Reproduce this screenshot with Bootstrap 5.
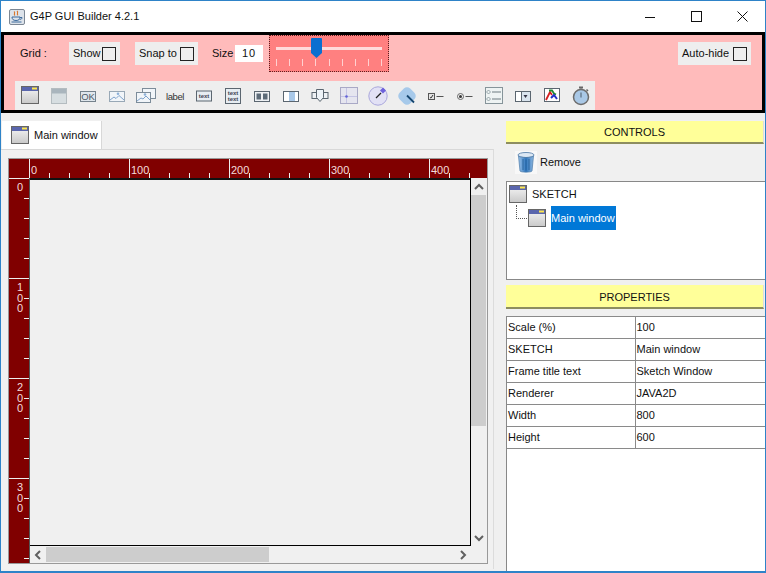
<!doctype html>
<html lang="en"><head><meta charset="utf-8"><title>G4P GUI Builder</title>
<link href="https://cdn.jsdelivr.net/npm/bootstrap@5.3.0/dist/css/bootstrap.min.css" rel="stylesheet">
<style>
html,body{margin:0;height:573px;width:766px;overflow:hidden}
body{font-family:"Liberation Sans",Arial,sans-serif;font-size:11px;line-height:1.2;color:#111;background:#eee;white-space:nowrap}
svg{display:block;flex:none}
.win{height:573px;border:1px solid #2e83c8;border-width:1px 1px 2px 1px;background:#f0f0f0}
.titlebar{height:31px;background:#fff}
.app-ico{margin-left:8px;margin-right:5px}
.title{font-size:11px}
.wbtn{width:46px;height:31px}
.tools{height:81px;border:3px solid #000;background:#ffbbbb}
.row1{height:37px}
.grid-l{width:65px;padding-left:16px}
.opt{height:23px;background:#eee;padding:0 4px}
.opt.show{width:51px;margin-right:15px}
.opt.snap{width:63px;margin-right:14px}
.opt.auto{width:73px;margin-right:11px}
.size-l{width:23px}
input.box[type=checkbox]{width:14px;height:14px;margin:0;border:1px solid #222;border-radius:0;background-color:transparent}
.size-v{width:28px;height:17px;background:#fff;margin-right:6px;letter-spacing:1px}
.slider{width:120px;height:37px;background:#ff8080;border:1px dotted #5a2020;padding:0 6px}
.track{height:3px;background:#ffdcdc;margin-top:11px}
.ticks{margin-top:9px;height:7px}
.ticks i{width:1px;background:#ffd0d0}
.thumb{left:41px;top:2px}
.toolbar{width:580px;height:29px;margin:9px 0 0 11px;background:#eee}
.cell{width:29px}
.main{height:458px}
.left{width:505px}
.tabs{height:36px;padding:8px 0 0 1px}
.tab{width:100px;height:28px;background:#fff;padding-left:9px;border-right:1px solid #d8d8d8;gap:5px}
.tab span,.t1 span,.sel{padding-top:1px}
.tabbody{border-top:1px solid #d8d8d8;border-right:1px solid #dcdcdc;padding:8px 0 0 7px;height:420px;margin-right:12px;background:#f1f1f1}
.pane{width:480px;height:406px;border:1px solid #999;background:#f0f0f0}
.rt{height:20px;background:#800000;color:#f3dcdc;overflow:hidden}
.rt-corner{width:20px;flex:none}
.rt-cell{width:100px;flex:none;border-left:1px solid #eee;padding:4px 0 0 1px;font-size:11px;line-height:14px;background:repeating-linear-gradient(90deg,transparent 0 19px,#eee 19px 20px) bottom/100% 5px no-repeat}
.rl{width:21px;flex:none;background:#800000;border-right:1px solid #555;overflow:hidden;color:#f3dcdc}
.rl-cell{height:100px;border-top:1px solid #eee;padding:2px 0 0 5px;font-size:11px;background:repeating-linear-gradient(180deg,transparent 0 19px,#eee 19px 20px) right/5px 100% no-repeat}
.rl-cell span{display:block;writing-mode:vertical-rl;text-orientation:upright;letter-spacing:-1.5px;line-height:11px;width:11px}
.canvas{background:#f0f0f0;border-top:2px solid #111;border-right:1px solid #000;border-bottom:1px solid #000}
.vbar{width:16px}
.vbar .end{height:17px}
.vbar .th{width:15px;height:231px;background:#cdcdcd}
.hbar{height:17px}
.hbar .end{width:16px}
.hbar .th{width:223px;height:15px;background:#cdcdcd}
.right{width:259px}
.ybtn{height:23px;padding:2px 0 0;background:#ffff99;border:0;border-bottom:2px solid #8d8d60;border-right:1px solid #ddd;margin-right:1px;color:#111;font-size:11px;line-height:1}
.ybtn.p2{height:24px;margin-top:5px;padding-top:3px}
.remove{height:37px;padding-left:9px;gap:3px}
.tree{height:99px;background:#fff;border:1px solid #888;border-right:0;padding-top:3px}
.t1{height:18px;padding-left:2px;gap:5px}
.t2{margin-top:3px;height:24px}
.conn{width:11px;height:14px;margin:-1px 1px 0 9px;align-self:flex-start;border-left:1px dotted #555;border-bottom:1px dotted #555}
.sel{background:#0078d7;color:#fff;width:65px;height:24px;margin-left:5px}
.props{flex:1;background:#fff;border-left:1px solid #888;margin-top:7px}
.table.pt{margin:0;width:258px;table-layout:fixed;border-collapse:collapse;font-size:11px}
.pt td{padding:0 0 0 1px;height:22px;border:1px solid #8a8a8a;border-left:0;border-right:0;vertical-align:middle;background:#fff;color:#111;line-height:1}
.pt td:first-child{width:128px;border-right:1px solid #8a8a8a}
.fg{min-height:0}
</style></head><body>
<svg width="0" height="0" class="position-absolute">
<defs><linearGradient id="g1" x1="0" y1="0" x2="0" y2="1"><stop offset="0" stop-color="#f6f6f6"/><stop offset="1" stop-color="#c9c9c9"/></linearGradient>
<linearGradient id="tc" x1="0" y1="0" x2="1" y2="0"><stop offset="0" stop-color="#9cc3ea"/><stop offset=".5" stop-color="#2f76bd"/><stop offset="1" stop-color="#8fb8e0"/></linearGradient></defs>
<symbol id="win" viewBox="0 0 18 18"><rect x=".5" y=".5" width="17" height="17" fill="url(#g1)" stroke="#666"/><rect x="1" y="1" width="16" height="4" fill="#5a66ad"/><rect x="11" y="1.5" width="5" height="2" fill="#ffe84d"/></symbol>
</svg>
<div class="win d-flex flex-column">
 <div class="titlebar d-flex align-items-center">
  <svg class="app-ico" width="16" height="16" viewBox="0 0 16 16"><rect x=".5" y=".5" width="15" height="15" rx="1.5" fill="#dde3ea" stroke="#7c8794"/><path d="M5 2.500c2 1.500-1 2.500 1 4M8 2c2 1.800-1 2.800 1 4.400" fill="none" stroke="#d9762b" stroke-width="1.100"/><path d="M3 8h8c0 2-1 3.500-4 3.500S3 10 3 8zM11 8.500h2c0 1.500-1 2-2.300 2" fill="none" stroke="#3d6a9c"/><path d="M2.500 13h10" stroke="#3d6a9c"/></svg>
  <span class="title">G4P GUI Builder 4.2.1</span>
  <div class="ms-auto d-flex">
   <div class="wbtn d-flex align-items-center justify-content-center"><svg width="10" height="10" viewBox="0 0 10 10"><path d="M0 5.500h10" stroke="#111"/></svg></div>
   <div class="wbtn d-flex align-items-center justify-content-center"><svg width="11" height="11" viewBox="0 0 11 11"><rect x=".5" y=".5" width="10" height="10" fill="none" stroke="#111"/></svg></div>
   <div class="wbtn d-flex align-items-center justify-content-center"><svg width="11" height="11" viewBox="0 0 11 11"><path d="M.5.5l10 10M10.500.5l-10 10" stroke="#111" fill="none"/></svg></div>
  </div>
 </div>
 <div class="tools">
  <div class="row1 d-flex align-items-center">
   <div class="grid-l">Grid :</div>
   <div class="opt show d-flex align-items-center justify-content-between"><span>Show</span><input class="box form-check-input" type="checkbox"></div>
   <div class="opt snap d-flex align-items-center justify-content-between"><span>Snap to</span><input class="box form-check-input" type="checkbox"></div>
   <div class="size-l">Size</div>
   <div class="size-v d-flex align-items-center justify-content-center">10</div>
   <div class="slider position-relative">
    <div class="track"></div>
    <div class="ticks d-flex justify-content-between"><i></i><i></i><i></i><i></i><i></i><i></i><i></i><i></i><i></i></div>
    <svg class="thumb position-absolute" width="11" height="20" viewBox="0 0 11 20"><path d="M1 0h9a1 1 0 0 1 1 1v14l-5.500 5L0 15V1a1 1 0 0 1 1-1z" fill="#0a6fd0"/></svg>
   </div>
   <div class="opt auto ms-auto d-flex align-items-center justify-content-between"><span>Auto-hide</span><input class="box form-check-input" type="checkbox"></div>
  </div>
  <div class="toolbar d-flex align-items-center">
   <div class="cell d-flex justify-content-center"><svg width="24" height="24" viewBox="0 0 24 24"><use href="#win" x="3" y="2" width="18" height="18"/></svg></div>
   <div class="cell d-flex justify-content-center"><svg width="24" height="24" viewBox="0 0 24 24"><rect x="4.500" y="4.500" width="15" height="15" fill="#d7dee1" stroke="#b4bcc0"/><rect x="5" y="5" width="14" height="4.500" fill="#a9b5bd"/></svg></div>
   <div class="cell d-flex justify-content-center"><svg width="24" height="24" viewBox="0 0 24 24"><rect x="4.500" y="7.500" width="15" height="10" fill="#dfe6ec" stroke="#75828c"/><text x="12" y="16" font-size="9.500" text-anchor="middle" fill="#4d5a66" font-family="Liberation Sans">OK</text></svg></div>
   <div class="cell d-flex justify-content-center"><svg width="24" height="24" viewBox="0 0 24 24"><rect x="4.500" y="7.500" width="15" height="10" fill="#f1f5f9" stroke="#98a8b6"/><path d="M5 16l4-3 2 1.500 3-3 5 4.500" fill="none" stroke="#7fa3cc"/><circle cx="13" cy="9.800" r="1.300" fill="#8cb0d8"/></svg></div>
   <div class="cell d-flex justify-content-center"><svg width="24" height="24" viewBox="0 0 24 24"><rect x="8.500" y="4.500" width="13" height="10" fill="#f1f5f9" stroke="#7c8c9a"/><rect x="2.500" y="8.500" width="14" height="10" fill="#f1f5f9" stroke="#7c8c9a"/><path d="M3 17l4-3 2 1 3-3 4 4" fill="none" stroke="#7fa3cc"/><circle cx="11" cy="10.500" r="1.300" fill="#8cb0d8"/></svg></div>
   <div class="cell d-flex justify-content-center"><svg width="24" height="24" viewBox="0 0 24 24"><text x="12" y="15.500" font-size="9.500" text-anchor="middle" fill="#333" letter-spacing="-.4" font-family="Liberation Sans">label</text></svg></div>
   <div class="cell d-flex justify-content-center"><svg width="24" height="24" viewBox="0 0 24 24"><rect x="4.500" y="7" width="15" height="10" fill="#e7edf2" stroke="#5b6670"/><text x="12" y="14" font-size="6" font-weight="700" text-anchor="middle" fill="#445" font-family="Liberation Sans">text</text></svg></div>
   <div class="cell d-flex justify-content-center"><svg width="24" height="24" viewBox="0 0 24 24"><rect x="4.500" y="4.500" width="15" height="15" fill="#e7edf2" stroke="#5b6670"/><text x="12" y="10.500" font-size="6" font-weight="700" text-anchor="middle" fill="#445" font-family="Liberation Sans">text</text><text x="12" y="17" font-size="6" font-weight="700" text-anchor="middle" fill="#445" font-family="Liberation Sans">text</text></svg></div>
   <div class="cell d-flex justify-content-center"><svg width="24" height="24" viewBox="0 0 24 24"><rect x="4.500" y="7.500" width="15" height="10" fill="#eef1f4" stroke="#5b6670"/><rect x="6.500" y="9.500" width="4.500" height="6" fill="#5d6b78"/><rect x="13" y="9.500" width="4.500" height="6" fill="#5d6b78"/></svg></div>
   <div class="cell d-flex justify-content-center"><svg width="24" height="24" viewBox="0 0 24 24"><rect x="4.500" y="7.500" width="15" height="10" fill="#fff" stroke="#5b6670"/><rect x="10" y="8" width="6" height="9" fill="#a9c8e8"/></svg></div>
   <div class="cell d-flex justify-content-center"><svg width="24" height="24" viewBox="0 0 24 24"><rect x="4" y="8.500" width="16" height="6" fill="#eef1f4" stroke="#5b6670"/><path d="M8.500 5.500h7v8l-3.500 4-3.500-4z" fill="#eef3f7" stroke="#5b6670"/></svg></div>
   <div class="cell d-flex justify-content-center"><svg width="24" height="24" viewBox="0 0 24 24"><rect x="3.500" y="3.500" width="17" height="16" fill="#e5e5ef" stroke="#a9a9c6"/><path d="M9.500 4v15M4 12.500h16" stroke="#c4c4e4"/><circle cx="9.500" cy="12.500" r="1.300" fill="#6262d8"/></svg></div>
   <div class="cell d-flex justify-content-center"><svg width="24" height="24" viewBox="0 0 24 24"><circle cx="12" cy="12" r="9.200" fill="#e2e1f5" stroke="#aaa7dc"/><path d="M17 3.500l3 3-3 3-3-3z" fill="#6e62dc"/><path d="M10 14l5-5" stroke="#222" stroke-width="1.300"/></svg></div>
   <div class="cell d-flex justify-content-center"><svg width="24" height="24" viewBox="0 0 24 24"><rect x="4.500" y="4.500" width="15" height="15" rx="4.500" transform="rotate(45 12 12)" fill="#a6c9ea"/><path d="M12 11.500l7 7" stroke="#15466f" stroke-width="1.800"/></svg></div>
   <div class="cell d-flex justify-content-center"><svg width="24" height="24" viewBox="0 0 24 24"><rect x="4.500" y="9.500" width="6" height="6" fill="#e4e4e4" stroke="#555"/><path d="M6 13.500l1 .5 2-3" stroke="#333" fill="none"/><path d="M12.500 12.500h7" stroke="#555"/></svg></div>
   <div class="cell d-flex justify-content-center"><svg width="24" height="24" viewBox="0 0 24 24"><circle cx="7.500" cy="12.500" r="3" fill="#f2f2f2" stroke="#666"/><circle cx="7.500" cy="12.500" r="1.500" fill="#333"/><path d="M12.500 12.500h7" stroke="#555"/></svg></div>
   <div class="cell d-flex justify-content-center"><svg width="24" height="24" viewBox="0 0 24 24"><rect x="3.500" y="3.500" width="17" height="16" fill="#eef3f3" stroke="#86949a"/><path d="M6.500 6l2 2-2 2-2-2zM6.500 13l2 2-2 2-2-2z" fill="none" stroke="#7f8f96" stroke-width=".8"/><path d="M10 8h9M10 15h9" stroke="#6d7a80"/></svg></div>
   <div class="cell d-flex justify-content-center"><svg width="24" height="24" viewBox="0 0 24 24"><rect x="4.500" y="7.500" width="15" height="10" fill="#fff" stroke="#5b6670"/><rect x="10.500" y="8" width="8.500" height="9" fill="#d9e4ee"/><path d="M10.500 8v9" stroke="#5b6670"/><path d="M12.500 11h4l-2 3z" fill="#334"/></svg></div>
   <div class="cell d-flex justify-content-center"><svg width="24" height="24" viewBox="0 0 24 24"><rect x="4.500" y="4.500" width="15" height="13" fill="#fff" stroke="#5b6670"/><path d="M6 16l4-8 2 3" fill="none" stroke="#d32020" stroke-width="1.800"/><path d="M9 6.500h3l2 3 2 1" fill="none" stroke="#1d8a2f" stroke-width="1.800"/><path d="M11 14l3-3 3 4" fill="none" stroke="#2030c8" stroke-width="2"/></svg></div>
   <div class="cell d-flex justify-content-center"><svg width="24" height="24" viewBox="0 0 24 24"><rect x="10" y="2.500" width="4" height="2" fill="#666"/><path d="M12 4.500v2M17.500 5.500l1.500 1.500" stroke="#666" stroke-width="1.500"/><circle cx="12" cy="13" r="7.500" fill="#a9c8e6" stroke="#6c6c6c" stroke-width="1.500"/><path d="M12 8.500v5" stroke="#4b5a68"/></svg></div>
  </div>
 </div>
 <div class="main d-flex">
  <div class="left">
   <div class="tabs"><div class="tab d-flex align-items-center"><svg width="18" height="18"><use href="#win" width="18" height="18"/></svg><span>Main window</span></div></div>
   <div class="tabbody">
    <div class="pane d-flex flex-column">
     <div class="rt d-flex"><div class="rt-corner"></div>
      <div class="rt-cell">0</div><div class="rt-cell">100</div><div class="rt-cell">200</div><div class="rt-cell">300</div><div class="rt-cell">400</div></div>
     <div class="d-flex flex-grow-1 fg">
      <div class="rl">
       <div class="rl-cell"><span>0</span></div><div class="rl-cell"><span>100</span></div><div class="rl-cell"><span>200</span></div><div class="rl-cell"><span>300</span></div>
      </div>
      <div class="d-flex flex-column flex-grow-1">
       <div class="d-flex flex-grow-1">
        <div class="canvas flex-grow-1"></div>
        <div class="vbar d-flex flex-column">
         <div class="end d-flex align-items-center justify-content-center"><svg width="10" height="8" viewBox="0 0 10 8"><path d="M1 6l4-4 4 4" fill="none" stroke="#606060" stroke-width="2"/></svg></div>
         <div class="th"></div>
         <div class="flex-grow-1"></div>
         <div class="end d-flex align-items-center justify-content-center"><svg width="10" height="8" viewBox="0 0 10 8"><path d="M1 2l4 4 4-4" fill="none" stroke="#606060" stroke-width="2"/></svg></div>
        </div>
       </div>
       <div class="hbar d-flex align-items-center">
        <div class="end d-flex align-items-center justify-content-center"><svg width="8" height="10" viewBox="0 0 8 10"><path d="M6 1L2 5l4 4" fill="none" stroke="#606060" stroke-width="2"/></svg></div>
        <div class="th"></div>
        <div class="flex-grow-1"></div>
        <div class="end me-3 d-flex align-items-center justify-content-center"><svg width="8" height="10" viewBox="0 0 8 10"><path d="M2 1l4 4-4 4" fill="none" stroke="#606060" stroke-width="2"/></svg></div>
       </div>
      </div>
     </div>
    </div>
   </div>
  </div>
  <div class="right d-flex flex-column pt-2">
   <button class="ybtn btn rounded-0" type="button">CONTROLS</button>
   <div class="remove d-flex align-items-center">
    <svg width="22" height="23" viewBox="0 0 22 23"><rect width="22" height="23" fill="#f8f8f8"/><ellipse cx="11" cy="4" rx="8" ry="2.500" fill="#dce8f4" stroke="#6a8fb5"/><path d="M3.500 5l1.500 15c.5 1.500 11.500 1.500 12 0L18.500 5c-2 2-13 2-15 0z" fill="url(#tc)" stroke="#4a7aa8" stroke-width=".7"/><path d="M8 8v11M11 8.500V19.500M14 8v11" stroke="#1f5a96" stroke-width=".8"/></svg>
    <span>Remove</span>
   </div>
   <div class="tree">
    <div class="t1 d-flex align-items-center"><svg width="18" height="18"><use href="#win" width="18" height="18"/></svg><span>SKETCH</span></div>
    <div class="t2 d-flex align-items-center"><div class="conn"></div><svg width="18" height="18"><use href="#win" width="18" height="18"/></svg><div class="sel d-flex align-items-center">Main window</div></div>
   </div>
   <button class="ybtn p2 btn rounded-0" type="button">PROPERTIES</button>
   <div class="props">
    <table class="table pt"><tbody>
     <tr><td>Scale (%)</td><td>100</td></tr>
     <tr><td>SKETCH</td><td>Main window</td></tr>
     <tr><td>Frame title text</td><td>Sketch Window</td></tr>
     <tr><td>Renderer</td><td>JAVA2D</td></tr>
     <tr><td>Width</td><td>800</td></tr>
     <tr><td>Height</td><td>600</td></tr>
    </tbody></table>
   </div>
  </div>
 </div>
</div>
</body></html>
